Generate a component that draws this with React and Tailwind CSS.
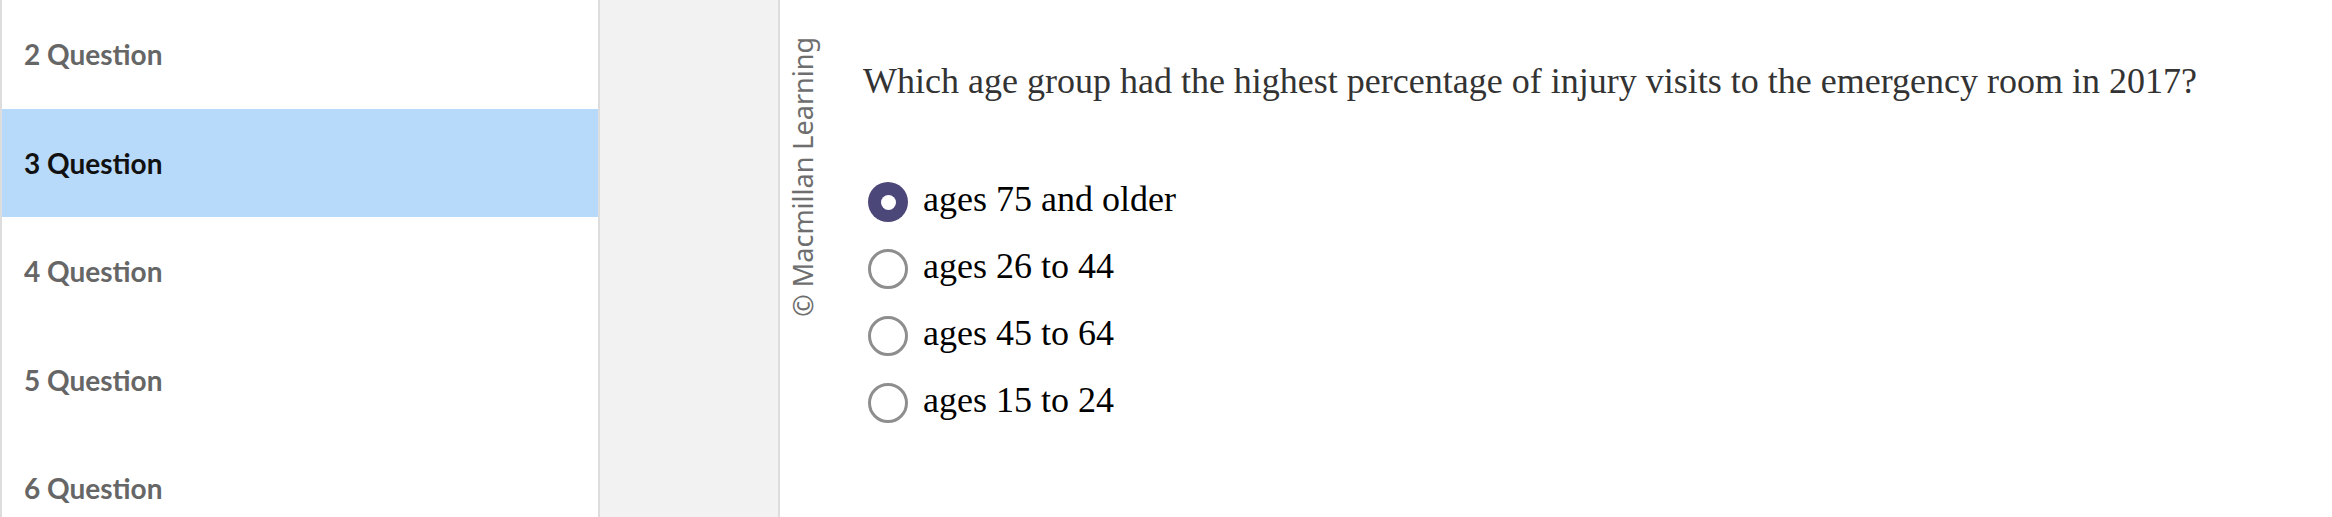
// Assignment player: question list on the left, current question on the right.
const questions = [2, 3, 4, 5, 6]
const current = 3

const choices = [
  { id: 'a', label: 'ages 75 and older' },
  { id: 'b', label: 'ages 26 to 44' },
  { id: 'c', label: 'ages 45 to 64' },
  { id: 'd', label: 'ages 15 to 24' },
]

function QuestionList() {
  return (
    <nav className="w-[600px] shrink-0 border-l-2 border-r-2 border-[#dddddd] bg-white overflow-hidden">
      {questions.map((n) => (
        <div
          key={n}
          className={
            n === current
              ? 'h-[108.5px] flex items-center pl-[22px] bg-[#b8dafa] text-[#111111]'
              : 'h-[108.5px] flex items-center pl-[22px] text-[#666666]'
          }
        >
          <span className="font-['Lato',sans-serif] font-bold text-[28px] leading-none">{n} Question</span>
        </div>
      ))}
    </nav>
  )
}

function Radio({ checked }) {
  if (checked) {
    return (
      <span className="w-[40px] h-[40px] rounded-full bg-[#4c4779] flex items-center justify-center">
        <span className="block w-[15px] h-[15px] rounded-full bg-white" />
      </span>
    )
  }
  return <span className="block w-[40px] h-[40px] rounded-full border-[3.5px] border-[#8e8e8e] bg-white" />
}

export default function App() {
  return (
    <div className="flex h-[517px] w-full overflow-hidden bg-white">
      <QuestionList />

      {/* Gutter */}
      <div className="w-[180px] shrink-0 bg-[#f2f2f2] border-r-2 border-[#dddddd]" />

      {/* Question */}
      <main className="flex-1 flex">
        <div className="w-[83px] shrink-0 pl-[8px] pt-[37px]">
          <div className="[writing-mode:vertical-rl] [text-orientation:sideways] rotate-180 font-['Noto_Sans','Open_Sans',sans-serif] text-[27px] leading-[30px] text-[#6e6e6e] whitespace-nowrap">
            © Macmillan Learning
          </div>
        </div>

        <div className="flex-1 pt-[61px] font-['Liberation_Serif','Times_New_Roman',serif]">
          <p className="text-[36px] leading-[40px] text-[#333333]">
            Which age group had the highest percentage of injury visits to the emergency room in 2017?
          </p>

          <ul className="mt-[65px] pl-[5px]">
            {choices.map((c, i) => (
              <li key={c.id} className="h-[67px] flex items-start gap-[15px]">
                <span className="block shrink-0 mt-[16px]">
                  <Radio checked={i === 0} />
                </span>
                <span className="mt-[13px] text-[36px] leading-[40px] text-black">{c.label}</span>
              </li>
            ))}
          </ul>
        </div>
      </main>
    </div>
  )
}
